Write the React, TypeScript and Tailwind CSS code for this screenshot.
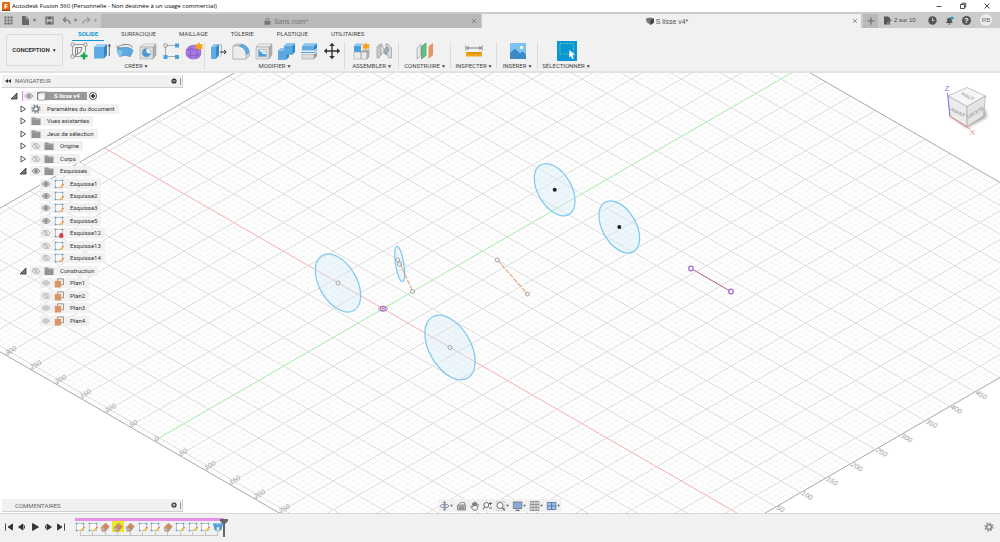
import type { ReactNode } from 'react';
import { clsx } from 'clsx';

/* ---------- ribbon icons, 18 x 18 ---------- */

function Glyph({ children, className = 'size-[18px]', box = 18 }: { children: ReactNode; className?: string; box?: number }) {
  return (
    <svg viewBox={`0 0 ${box} ${box}`} className={clsx('shrink-0', className)} fill="none" aria-hidden="true">
      {children}
    </svg>
  );
}

const NewSketch = () => (
  <Glyph>
    <path d="M3 2.500h12M3 14.500h7M2.500 3v11.500M15.500 3v7" stroke="#888" strokeWidth=".8" />
    <path d="M5.500 5.500h6.500l-1.500 4.500-5 3.500zM7.500 5.500v6.500" stroke="#666" strokeWidth=".8" />
    <path d="M1 1h3v3H1zM14 1h3v3h-3zM1 13h3v3H1z" fill="#f4f4f4" stroke="#888" strokeWidth=".7" />
    <path d="M14 10.500v7M10.500 14h7" stroke="#1fa64a" strokeWidth="2.400" />
  </Glyph>
);

const Extrude = () => (
  <Glyph>
    <path d="M1 5l3-3h10l-3 3z" fill="#9fd0f2" />
    <path d="M1 5h10v11.500H1z" fill="#5ea9e2" />
    <path d="M11 5l3-3v11l-3 3.500z" fill="#3583c2" />
    <path d="M16.300 14V3M15.100 4.600l1.200-2.600 1.200 2.600" stroke="#444" strokeWidth=".8" />
  </Glyph>
);

const Revolve = () => (
  <Glyph>
    <path d="M1 9C2 4 16 4 17 9l-3 6c-2-2-8-2-10 0z" fill="#5ea9e2" stroke="#3d87c4" strokeWidth=".6" />
    <path d="M1 9c3-2.500 5-1 6 1.500L4 15z" fill="#86c2ee" />
    <path d="M1.500 6.500C3 1.500 15 1 16.500 5.500M1 3.500l.5 3 3-.8" stroke="#777" strokeWidth=".9" />
  </Glyph>
);

const Hole = () => (
  <Glyph>
    <path d="M1 5l4-3h12l-3 3z" fill="#eee" stroke="#999" strokeWidth=".5" />
    <path d="M14 5l3-3v11l-3 4z" fill="#b0b0b0" stroke="#999" strokeWidth=".5" />
    <path d="M1 5h13v12H1z" fill="#dedede" stroke="#999" strokeWidth=".5" />
    <circle cx="7.500" cy="10.500" r="4.300" fill="#fff" stroke="#888" strokeWidth=".6" />
    <path d="M7.500 10.500V6.400a4.200 4.200 0 1 0 4 5.300z" fill="#4a9ad6" />
  </Glyph>
);

const Pattern = () => (
  <Glyph>
    <path d="M3.500 3.500h11M3.500 3.500v11h11" stroke="#999" strokeWidth=".8" />
    <path d="M2 2h3v3H2z" fill="#fff" stroke="#888" strokeWidth=".8" />
    <path d="M13 1.500h4v4h-4zM1.500 13h4v4h-4zM13 13h4v4h-4z" fill="#4d9fdc" />
  </Glyph>
);

const Freeform = () => (
  <Glyph>
    <path d="M2 6c3-4 10-4 13-1 2 4 2 8-1 11-4 2-9 2-12-1-2-3-2-6 0-9z" fill="#a67bdf" />
    <path d="M1 8c4-1 10-1 15 0M1 12.500c4 1.500 10 1.500 15 0M6 4c-1 4-1 9 0 13M11.500 4c1 4 1 9 0 13" stroke="#8455c6" strokeWidth=".8" />
    <path d="M14 0l1.200 2.500L18 2l-1 2.500L18 7l-2.800-.5L14 9l-1.200-2.500L10 7l1-2.500L10 2l2.800.5z" fill="#f6a21b" />
  </Glyph>
);

const PressPull = () => (
  <Glyph>
    <path d="M2 5l3-3h5l-3 3v12H2z" fill="#8cc6f0" />
    <path d="M7 5l3-3v11l-3 4z" fill="#3a8ac9" />
    <path d="M2 5h5v12H2z" fill="#61ace3" />
    <path d="M10 3h2.500v10L10 15" stroke="#999" strokeWidth=".7" />
    <path d="M11 10h6M15 8l2.200 2L15 12" stroke="#333" strokeWidth="1" />
  </Glyph>
);

const Fillet = () => (
  <Glyph>
    <path d="M1 4l3-2h5c6 1 8 5 8.500 9v3L14 17H1z" fill="#cfcfcf" stroke="#9b9b9b" strokeWidth=".5" />
    <path d="M1 4h5c5 1 8 4 8 9v4H1z" fill="#ececec" stroke="#9b9b9b" strokeWidth=".5" />
    <path d="M6 4l4-2c4 1 7 4 7.500 8.500L14 13C14 8 11 5 6 4z" fill="#5ba8e1" />
  </Glyph>
);

const Shell = () => (
  <Glyph>
    <path d="M1 5l3-3h13l-3 3z" fill="#eee" stroke="#999" strokeWidth=".5" />
    <path d="M14 5l3-3v11l-3 4z" fill="#b0b0b0" stroke="#999" strokeWidth=".5" />
    <path d="M1 5h13v12H1z" fill="#e2e2e2" stroke="#999" strokeWidth=".5" />
    <path d="M3.500 7.500h8v7h-8z" fill="#fff" stroke="#999" strokeWidth=".5" />
    <path d="M3.500 7.500L7 10.500v1l4.500 1v2h-8z" fill="#4d9fdc" />
    <path d="M7 8h4v3.500H7z" fill="#cfe6f6" />
  </Glyph>
);

const Combine = () => (
  <Glyph>
    <path d="M7 4l2.500-2.500H18V10l-2.500 2.500H12V15l-2.500 2.500H1V9l2.500-2.500H7z" fill="#3585c6" />
    <path d="M7 4h8.500v8.500H9.500v5H1V9h6z" fill="#5ba8e1" />
    <path d="M7 4l2.500-2.500H18L15.500 4zM1 9l2.500-2.500H7V9z" fill="#8cc6f0" />
  </Glyph>
);

const Offset = () => (
  <Glyph>
    <path d="M2 4l3-2.500h12l-3 2.500v4.500H2z" fill="#61ace3" />
    <path d="M2 4l3-2.500h12L14 4z" fill="#8cc6f0" />
    <path d="M14 4l3-2.500v4.500l-3 2.500z" fill="#3585c6" />
    <path d="M1 10.500h13l3.500-3" stroke="#4d9fdc" strokeWidth="1" />
    <path d="M2 12.500h12V17H2z" fill="#ddd" stroke="#999" strokeWidth=".5" />
    <path d="M14 12.500l3-2.500v4l-3 3z" fill="#999" />
  </Glyph>
);

const Move = () => (
  <Glyph>
    <path d="M9 2v14M2 9h14" stroke="#333" strokeWidth="1.400" />
    <path d="M9 .800l2.800 3.200H6.200zM9 17.200L11.800 14H6.200zM.8 9L4 6.200v5.600zM17.200 9L14 6.200v5.600z" fill="#333" />
  </Glyph>
);

const NewComponent = () => (
  <Glyph>
    <path d="M2 3.500h7V10H2z" fill="#4d9fdc" />
    <path d="M2 3.500L4 1.500h7l-2 2z" fill="#8cc6f0" />
    <path d="M2 10h7v7H2zM9 10h6v7H9z" fill="#ececec" stroke="#999" strokeWidth=".5" />
    <path d="M15 10l2-2v7l-2 2zM9 10l2-2h6l-2 2z" fill="#b5b5b5" stroke="#999" strokeWidth=".5" />
    <path d="M14 0l1 2.500 2.800-.5-1 2.300 1 2.500-2.800-.5-1 2.400-1-2.400-2.800.5 1-2.500-1-2.300 2.800.5z" fill="#f6a21b" />
  </Glyph>
);

const Joint = () => (
  <Glyph>
    <path d="M2 5l3-3h2v9l-3 5H2z" fill="#c9c9c9" stroke="#8a8a8a" strokeWidth=".6" />
    <path d="M5 4c4 0 4 3 4 6l-3 3V8z" fill="#e7e7e7" stroke="#8a8a8a" strokeWidth=".6" />
    <path d="M16.500 6L13 2h-2v8l3 6h2.500z" fill="#d9d9d9" stroke="#8a8a8a" strokeWidth=".6" />
    <path d="M13 5c-3 0-4 3-4 6l2 2 3-5z" fill="#9fadb8" stroke="#8a8a8a" strokeWidth=".6" />
  </Glyph>
);

const Plane = () => (
  <Glyph>
    <path d="M1 6l4-4v11l-4 4z" fill="#e6e6e6" stroke="#999" strokeWidth=".6" />
    <path d="M5.500 4.500L10 1v12.500L5.500 17z" fill="#5cc087" stroke="#3d8d60" strokeWidth=".6" />
    <path d="M12.500 4.500L17 1v12l-4.500 4z" fill="#e39566" />
  </Glyph>
);

const Measure = () => (
  <Glyph>
    <path d="M1 3.500v5M17 3.500v5M2 6h14M4 4.500L2 6l2 1.500M14 4.500L16 6l-2 1.500" stroke="#666" strokeWidth=".8" />
    <path d="M1 10h16v4.500H1z" fill="#f2a516" />
    <path d="M3 10v2M5 10v2M7 10v2M9 10v2M11 10v2M13 10v2M15 10v2" stroke="#a56b00" strokeWidth=".6" />
  </Glyph>
);

const InsertImage = () => (
  <Glyph>
    <path d="M1 1h16v16H1z" fill="#7cc3f5" />
    <path d="M1 11l5-4.500 5 5 2.500-2 3.500 3V17H1z" fill="#3a8ac9" />
    <circle cx="12.500" cy="5.500" r="1.800" fill="#fdf7c9" />
  </Glyph>
);

const SelectTool = () => (
  <Glyph className="size-5 bg-[#0b96d8]" box={20}>
    <path d="M3 2.500h13.500v10.500H3z" stroke="#5fd08b" strokeWidth=".9" strokeDasharray="2 1" />
    <path d="M12.500 9l5.500 5-2.500.3 1.300 2.900-1.600.8-1.300-3-1.800 1.700z" fill="#fff" />
  </Glyph>
);

/* ---------- small glyphs ---------- */

function Eye({ tone = '#888', off = false }: { tone?: string; off?: boolean }) {
  return (
    <Glyph className="size-[10px]" box={10}>
      <path d="M1 5c2-3.300 6-3.300 8 0-2 3.300-6 3.300-8 0z" stroke={tone} strokeWidth=".8" fill={off ? 'none' : '#ccc'} />
      <circle cx="5" cy="5" r="1.400" fill={off ? 'none' : tone} stroke={tone} strokeWidth=".6" />
      {off && <path d="M1.800 2l6.500 6" stroke={tone} strokeWidth=".7" />}
    </Glyph>
  );
}

const Folder = () => (
  <Glyph className="size-[10px]" box={10}>
    <path d="M.5 1.500h3.500l1 1h4.500v6.500h-9z" fill="#929292" />
    <path d="M.5 3.300h9" stroke="#bbb" strokeWidth=".5" />
  </Glyph>
);

const Gear = () => (
  <Glyph className="size-[10px]" box={10}>
    <circle cx="5" cy="5" r="2.500" stroke="#888" strokeWidth="1.700" />
    <circle cx="5" cy="5" r="4" stroke="#888" strokeWidth="1.200" strokeDasharray="1.570 1.570" />
  </Glyph>
);

function SketchIcon({ locked = false }: { locked?: boolean }) {
  return (
    <Glyph className="size-[10px]" box={10}>
      <path d="M1.500 1.500h7v7h-7z" stroke="#aaa" strokeWidth=".7" fill="#fafafa" />
      <path d="M.700.700h1.600v1.600H.7zM7.700.700h1.600v1.600H7.700zM.7 7.700h1.600v1.600H.7z" fill={locked ? '#888' : '#4d9fdc'} />
      {locked ? (
        <path d="M5.500 6.500h3.500v3h-3.500zM6.300 6.500V5.300h2v1.200" fill="#d2414b" stroke="#d2414b" strokeWidth=".6" />
      ) : (
        <>
          <path d="M5 9.500l.4-1.600L8.200 5.500l1 1-2.600 2.600z" fill="#f8bb45" />
          <path d="M8.200 5.500l1 1 .7-1-.8-.8z" fill="#e0563f" />
        </>
      )}
    </Glyph>
  );
}

const PlaneIcon = () => (
  <Glyph className="size-[10px]" box={10}>
    <path d="M3.500.800h6v6h-6z" stroke="#888" strokeWidth=".8" fill="#f5e6da" />
    <path d="M.8 3h6.200v6.500H.8z" fill="#dd9465" />
  </Glyph>
);

const ComponentIcon = () => (
  <Glyph className="size-[10px]" box={10}>
    <path d="M1 3l2-2h6v6L7.500 9H1z" fill="#cfcfcf" stroke="#666" strokeWidth=".6" />
    <path d="M1.500 3.200H7v5.500H1.500z" fill="#fafafa" />
  </Glyph>
);

const PlaneFeature = () => (
  <Glyph className="size-[10px]" box={10}>
    <path d="M1 5.500L5.500 1l4 3.500-4 5H2z" fill="#d98a5c" stroke="#a5a5a5" strokeWidth=".5" />
    <path d="M1 7.500l1.500-2.500 2.500 2.500-1.500 2z" fill="#b5b5b5" />
    <path d="M4 4.500l3 2.500" stroke="#8a9a6a" strokeWidth=".8" />
  </Glyph>
);

const FormFeature = () => (
  <Glyph className="size-[10px]" box={10}>
    <path d="M0 1h10L8.500 8 5 9.500 1.500 8z" fill="#4d9fdc" />
    <path d="M0 1l5 2 5-2z" fill="#8cc6f0" />
    <path d="M3.500 5.500l1.500-1 1.500 1V8L5 9.500 3.500 8z" fill="#e8e8e8" stroke="#999" strokeWidth=".4" />
  </Glyph>
);

const Caret = () => <span className="text-[5px] leading-none">▼</span>;

/* ---------- top bars ---------- */

function TitleBar() {
  return (
    <header className="flex h-3 items-center bg-white pr-[9px] pl-[2px] text-black">
      <svg viewBox="0 0 8 9" className="h-[9px] w-2" aria-hidden="true">
        <rect width="8" height="9" rx="1" fill="#e8670c" />
        <path d="M2.500 2h3.300v1.100H3.800v1h1.600v1.100H3.800V7H2.500z" fill="#fff" />
        <path d="M0 7.800h8V9H0z" fill="#9b3c00" />
      </svg>
      <h1 className="ml-[2px] font-['Open_Sans',sans-serif] text-[6px] leading-none">
        Autodesk Fusion 360 (Personnelle - Non destinée à un usage commercial)
      </h1>
      <div className="ml-auto flex items-center gap-4">
        <button aria-label="Réduire">
          <Glyph className="size-2" box={8}><path d="M1.500 4.500h5" stroke="#222" strokeWidth=".8" /></Glyph>
        </button>
        <button aria-label="Restaurer">
          <Glyph className="size-2" box={8}><path d="M1.500 2.500h4v4h-4zM3 2.500V1.200h3.800V5H5.500" stroke="#222" strokeWidth=".8" /></Glyph>
        </button>
        <button aria-label="Fermer">
          <Glyph className="size-2" box={8}><path d="M1.500 1.500l5 5M6.500 1.500l-5 5" stroke="#222" strokeWidth=".8" /></Glyph>
        </button>
      </div>
    </header>
  );
}

const Close = () => (
  <Glyph className="size-[6px]" box={6}><path d="M1 1l4 4M5 1L1 5" stroke="#777" strokeWidth=".8" /></Glyph>
);

function DocumentTabs() {
  return (
    <div className="flex h-4 bg-[#cbcbcb] pt-[2px] text-[7px] leading-none text-[#666]">
      <div className="flex w-[101px] shrink-0 items-center pb-[2px] pl-1 text-[#6a6a6a]">
        <button aria-label="Panneau de données">
          <Glyph className="size-[9px]" box={9}>
            <path d="M.5.500h2v2h-2zM3.500.500h2v2h-2zM6.500.500h2v2h-2zM.5 3.500h2v2h-2zM3.500 3.500h2v2h-2zM6.500 3.500h2v2h-2zM.5 6.500h2v2h-2zM3.500 6.500h2v2h-2zM6.500 6.500h2v2h-2z" fill="#666" />
          </Glyph>
        </button>
        <button aria-label="Fichier" className="ml-2 flex items-center gap-[2px]">
          <Glyph className="size-[9px]" box={9}><path d="M1 0h4l3 3v6H1z" fill="#666" /><path d="M5 0v3h3" stroke="#ccc" strokeWidth=".6" /></Glyph>
          <Caret />
        </button>
        <button aria-label="Enregistrer" className="ml-2">
          <Glyph className="size-[9px]" box={9}>
            <path d="M1 1h7v7H1z" stroke="#666" strokeWidth="1.200" />
            <path d="M2.500 1h4v2.500h-4zM2.500 5.500h4V8h-4z" fill="#666" />
          </Glyph>
        </button>
        <button aria-label="Annuler" className="ml-2 flex items-center gap-[2px]">
          <Glyph className="size-[9px]" box={9}><path d="M8 8C8 4.500 6 3.500 2 3.700M4 1L1.200 3.700 4 6.200" stroke="#777" strokeWidth="1.200" /></Glyph>
          <Caret />
        </button>
        <button aria-label="Rétablir" className="ml-1 flex items-center gap-[2px] text-[#999]">
          <Glyph className="size-[9px]" box={9}><path d="M1 8c0-3.500 2-4.500 6-4.300M5 1l2.800 2.700L5 6.200" stroke="#999" strokeWidth="1.200" /></Glyph>
          <Caret />
        </button>
      </div>
      <div className="flex flex-1 items-center bg-[#b9b9b9] pr-1">
        <button className="flex flex-1 items-center justify-center gap-[3px] text-[#777]">
          <Glyph className="size-[7px]" box={7}>
            <path d="M.5 3h6v3.800h-6z" fill="#777" />
            <path d="M2 3V1.800a1.500 1.500 0 0 1 3 0V3" stroke="#777" strokeWidth=".9" />
          </Glyph>
          Sans nom*
        </button>
        <button aria-label="Fermer Sans nom"><Close /></button>
      </div>
      <div className="ml-px flex flex-1 items-center bg-[#f1f1f1] pr-[3px]">
        <button className="flex flex-1 items-center justify-center gap-[2px] text-[#555]">
          <Glyph className="size-2" box={8}>
            <path d="M0 1.500L4 .500l4 1v4L4.500 8 .5 5z" fill="#777" />
            <path d="M4.500 3L8 1.500v4L4.500 8z" fill="#444" />
          </Glyph>
          S lisse v4*
        </button>
        <button aria-label="Fermer S lisse v4"><Close /></button>
      </div>
      <button aria-label="Nouvel onglet" className="ml-[2px] flex w-[15px] items-center justify-center bg-[#b9b9b9]">
        <Glyph className="size-2" box={8}><path d="M4 .500v7M.5 4h7" stroke="#666" strokeWidth="1.100" /></Glyph>
      </button>
      <div className="flex w-[122px] shrink-0 items-center pb-[2px] pl-[5px]">
        <button className="flex w-9 items-center gap-[2px] text-[6px] whitespace-nowrap text-[#444]">
          <Glyph className="size-[9px]" box={9}>
            <path d="M1 .500h4L7 2v6.500H1z" fill="#555" />
            <path d="M4 7l4-4 1 1-4 4z" fill="#555" stroke="#ccc" strokeWidth=".4" />
          </Glyph>
          2 sur 10
        </button>
        <button aria-label="État des tâches" className="ml-[9px]">
          <Glyph className="size-[9px]" box={9}><circle cx="4.500" cy="4.500" r="4.200" fill="#555" /><path d="M4.500 2v2.700h2" stroke="#ddd" strokeWidth=".9" /></Glyph>
        </button>
        <button aria-label="Notifications" className="ml-2">
          <Glyph className="size-[9px]" box={9}>
            <path d="M1 7c1-1 1-2 1.200-3.500.3-2.500 4-2.500 4.300 0C6.700 5 7 6 8 7zM3.500 7.500h2v1h-2z" fill="#555" />
            <circle cx="7" cy="2" r="1.600" fill="#1696d9" />
          </Glyph>
        </button>
        <button aria-label="Aide" className="ml-2 flex size-[9px] items-center justify-center rounded-full bg-[#555] text-[7px] font-bold text-white">?</button>
        <button className="ml-[9px] flex size-3 items-center justify-center rounded-full bg-[#ececec] text-[6px] text-[#666]">RB</button>
      </div>
    </div>
  );
}

const workspaceTabs = ['SOLIDE', 'SURFACIQUE', 'MAILLAGE', 'TÔLERIE', 'PLASTIQUE', 'UTILITAIRES'];

const toolGroups = [
  { label: 'CRÉER', width: 'w-[137px]', tools: [NewSketch, Extrude, Revolve, Hole, Pattern, Freeform] },
  { label: 'MODIFIER', width: 'w-[140px] px-[2px]', tools: [PressPull, Fillet, Shell, Combine, Offset, Move] },
  { label: 'ASSEMBLER', width: 'w-[54px] px-1', tools: [NewComponent, Joint] },
  { label: 'CONSTRUIRE', width: 'w-[52px]', tools: [Plane] },
  { label: 'INSPECTER', width: 'w-[46px]', tools: [Measure] },
  { label: 'INSÉRER', width: 'w-[41px]', tools: [InsertImage] },
  { label: 'SÉLECTIONNER', width: 'w-[57px]', tools: [SelectTool] },
];

function Ribbon() {
  return (
    <div className="flex h-[45px] border-b-2 border-[#e2e2e2] bg-[#f1f1f1] font-[Roboto,sans-serif] text-[6px] leading-none text-[#444]">
      <button className="mt-[6px] ml-[6px] flex h-8 w-[57px] items-center justify-center gap-[2px] rounded-xs border border-[#dadada] font-bold text-[#333]">
        CONCEPTION <Caret />
      </button>
      <div className="ml-[5px]">
        <nav className="flex gap-[11px] pl-1">
          {workspaceTabs.map((tab, i) => (
            <button
              key={tab}
              className={clsx('h-[13px] border-b px-[6px]', i === 0 ? 'border-[#1696d9] font-bold text-[#1696d9]' : 'border-transparent')}
            >
              {tab}
            </button>
          ))}
        </nav>
        <div className="flex">
          {toolGroups.map(({ label, width, tools }, i) => (
            <div key={label} className={clsx('relative', width)}>
              <div className="flex h-5 items-center justify-around">
                {tools.map((Tool, n) => (
                  <button key={n} aria-label={`${label} ${n + 1}`}><Tool /></button>
                ))}
              </div>
              <button className="flex h-[10px] w-full items-center justify-center gap-px whitespace-nowrap">
                {label} <Caret />
              </button>
              {i < toolGroups.length - 1 && <span className="absolute top-px right-0 h-[27px] w-px bg-[#dcdcdc]" />}
            </div>
          ))}
        </div>
      </div>
    </div>
  );
}

/* ---------- 3D canvas ---------- */

const ORIGIN = { x: 383, y: 308.7 };
const STEP = { x: 24.87, y: 14.36 };
const R_MIN = -11.2;
const R_MAX = 14.8;
const G_MIN = -9.2;
const G_MAX = 16.8;

// r runs along the red axis, g along the green one, one unit = 50 mm
const px = (r: number, g: number) => ORIGIN.x + STEP.x * (r + g);
const py = (r: number, g: number) => ORIGIN.y + STEP.y * (r - g);
const seg = (r1: number, g1: number, r2: number, g2: number) =>
  `M${px(r1, g1).toFixed(2)} ${py(r1, g1).toFixed(2)}L${px(r2, g2).toFixed(2)} ${py(r2, g2).toFixed(2)}`;

function gridPath(major: boolean) {
  let d = '';
  for (let i = 0; i <= 130; i++) {
    const r = R_MIN + i / 5;
    const g = G_MIN + i / 5;
    if (Math.abs(r - Math.round(r)) < 0.01 === major) d += seg(r, G_MIN, r, G_MAX);
    if (Math.abs(g - Math.round(g)) < 0.01 === major) d += seg(R_MIN, g, R_MAX, g);
  }
  return d;
}

const leftTicks = [-6, -5, -4, -3, -2, -1, 0, 1, 2, 3, 4, 5];
const rightTicks = [1, 2, 3, 4, 5, 6, 7, 8, 9];

const profiles = [
  { x: 338, y: 283, rx: 31.8, ry: 18.7, angle: 60 },
  { x: 450, y: 347.5, rx: 35.3, ry: 20.7, angle: 60 },
  { x: 554.7, y: 189.7, rx: 28.5, ry: 16.8, angle: 60 },
  { x: 619.3, y: 227, rx: 28.5, ry: 16.8, angle: 60 },
  { x: 399.7, y: 264, rx: 17.9, ry: 4.1, angle: 81 },
];

const openPoints = [[338, 283], [450, 347.5], [397.7, 260], [399.5, 264], [412.5, 291.5], [497.3, 260], [527.5, 294]];

function Scene() {
  return (
    <svg viewBox="0 73 1000 440" preserveAspectRatio="xMidYMid slice" className="absolute inset-0 size-full" fill="none" role="img" aria-label="Vue 3D">
      <path d={gridPath(false)} stroke="#f0f0f0" strokeWidth=".7" />
      <path d={gridPath(true)} stroke="#dcdcdc" strokeWidth="1" />
      <path
        d={seg(R_MIN, G_MIN, R_MAX, G_MIN) + seg(R_MAX, G_MIN, R_MAX, G_MAX) + seg(R_MIN, G_MIN, R_MIN, G_MAX) + seg(R_MIN, G_MAX, R_MAX, G_MAX)}
        stroke="#a2a2a2"
        strokeWidth=".9"
      />
      <path d={seg(R_MIN, 0, R_MAX, 0)} stroke="#ffb3b3" strokeWidth=".9" />
      <path d={seg(0, G_MIN, 0, G_MAX)} stroke="#a8f5a8" strokeWidth=".9" />

      <g fill="#9c9c9c" fontFamily="Liberation Sans, sans-serif" fontSize="7" fontStyle="italic">
        {leftTicks.map((t) => (
          <text key={t} transform={`translate(${px(t, G_MIN) + 2} ${py(t, G_MIN) + 1}) rotate(-30)`}>{Math.abs(t * 50)}</text>
        ))}
        {rightTicks.map((t) => (
          <text key={t} transform={`translate(${px(R_MAX, t)} ${py(R_MAX, t) + 2}) rotate(30)`}>{t * 50}</text>
        ))}
      </g>

      {profiles.map((p) => (
        <ellipse
          key={p.x}
          rx={p.rx}
          ry={p.ry}
          transform={`translate(${p.x} ${p.y}) rotate(${p.angle})`}
          fill="#d4ebf8"
          fillOpacity=".4"
          stroke="#7cc9f0"
          strokeWidth="1.200"
        />
      ))}
      <path d="M399.700 263L412.500 291M497.300 260L527.500 294" stroke="#e8a070" strokeWidth="1.100" strokeDasharray="5 1.200" />
      {openPoints.map(([x, y]) => (
        <circle key={x} cx={x} cy={y} r="2" stroke="#999" strokeWidth=".9" fill="#fff" fillOpacity=".5" />
      ))}
      <circle cx="554.700" cy="189.700" r="2" fill="#222" />
      <circle cx="619.300" cy="227" r="2" fill="#222" />

      <path d="M691 268.500L731 291.500" stroke="#b25c8c" strokeWidth="1" />
      <g stroke="#9a6cc8" strokeWidth="1.200" fill="#fff">
        <circle cx="691" cy="268.500" r="2.300" />
        <circle cx="731" cy="291.500" r="2.300" />
      </g>
      <ellipse cx="383" cy="308.700" rx="4.500" ry="2.400" stroke="#999" strokeWidth=".8" />
      <ellipse cx="383" cy="308.700" rx="3" ry="2.400" stroke="#a070c8" strokeWidth="1" fill="#d9b8e6" />
      <circle cx="383" cy="308.700" r=".8" fill="#e0903c" />
    </svg>
  );
}

function ViewCube() {
  return (
    <svg viewBox="0 0 54 62" className="absolute top-[8px] right-[7px] h-[62px] w-[54px]" fill="none" role="img" aria-label="Cube de visualisation">
      <defs>
        <filter id="soft" x="-30%" y="-30%" width="160%" height="160%"><feGaussianBlur stdDeviation="1.800" /></filter>
      </defs>
      <path d="M11 35L28 47 48 36 46 28 12 28z" fill="#aaa" filter="url(#soft)" />
      <path d="M28 6.500L46.500 15 28 25.500 9 15z" fill="#f6f6f6" stroke="#aaa" strokeWidth=".7" />
      <path d="M9 15l19 10.500v20L11 35z" fill="#ececec" stroke="#aaa" strokeWidth=".7" />
      <path d="M28 25.500L46.500 15l-2 20L28 45.500z" fill="#e4e4e4" stroke="#aaa" strokeWidth=".7" />
      <path d="M8.500 12L11 35.500" stroke="#7d7df0" strokeWidth="1" />
      <path d="M11 35.500L31 48" stroke="#f08a8a" strokeWidth="1" />
      <g fontFamily="Liberation Sans, sans-serif" fontSize="5" fill="#8a8a8a" textAnchor="middle">
        <text transform="translate(28 17) rotate(28)">HAUT</text>
        <text transform="translate(18 33) rotate(28)">AVANT</text>
        <text transform="translate(37.500 33) rotate(-30)">DROITE</text>
      </g>
      <g fontFamily="Liberation Sans, sans-serif" fontSize="8" textAnchor="middle">
        <text x="8" y="10" fill="#7d7df0">Z</text>
        <text x="33.500" y="54" fill="#f08a8a">X</text>
      </g>
    </svg>
  );
}

/* ---------- browser tree ---------- */

type Row = {
  name: string;
  depth: 1 | 2;
  icon: 'gear' | 'folder' | 'sketch' | 'locked' | 'plane';
  eye?: 'on' | 'off' | 'dim';
  open?: boolean;
};

const rows: Row[] = [
  { name: 'Paramètres du document', depth: 1, icon: 'gear' },
  { name: 'Vues existantes', depth: 1, icon: 'folder' },
  { name: 'Jeux de sélection', depth: 1, icon: 'folder' },
  { name: 'Origine', depth: 1, icon: 'folder', eye: 'off' },
  { name: 'Corps', depth: 1, icon: 'folder', eye: 'off' },
  { name: 'Esquisses', depth: 1, icon: 'folder', eye: 'on', open: true },
  { name: 'Esquisse1', depth: 2, icon: 'sketch', eye: 'on' },
  { name: 'Esquisse2', depth: 2, icon: 'sketch', eye: 'on' },
  { name: 'Esquisse3', depth: 2, icon: 'sketch', eye: 'on' },
  { name: 'Esquisse5', depth: 2, icon: 'sketch', eye: 'on' },
  { name: 'Esquisse12', depth: 2, icon: 'locked', eye: 'off' },
  { name: 'Esquisse13', depth: 2, icon: 'sketch', eye: 'off' },
  { name: 'Esquisse14', depth: 2, icon: 'sketch', eye: 'off' },
  { name: 'Construction', depth: 1, icon: 'folder', eye: 'off', open: true },
  { name: 'Plan1', depth: 2, icon: 'plane', eye: 'dim' },
  { name: 'Plan2', depth: 2, icon: 'plane', eye: 'off' },
  { name: 'Plan3', depth: 2, icon: 'plane', eye: 'dim' },
  { name: 'Plan4', depth: 2, icon: 'plane', eye: 'dim' },
];

const rowIcons = {
  gear: <Gear />,
  folder: <Folder />,
  sketch: <SketchIcon />,
  locked: <SketchIcon locked />,
  plane: <PlaneIcon />,
};

function Arrow({ open = false }: { open?: boolean }) {
  return (
    <Glyph className="size-2" box={8}>
      {open ? <path d="M7 1v6H1z" fill="#777" stroke="#333" strokeWidth=".8" /> : <path d="M2 1l4.500 3L2 7z" stroke="#444" strokeWidth=".9" fill="#fff" />}
    </Glyph>
  );
}

function TreeRow({ row }: { row: Row }) {
  return (
    <li className={clsx('flex items-center', row.depth === 1 ? 'pl-[19px]' : 'pl-10')}>
      {row.depth === 1 && (
        <button aria-label={`Développer ${row.name}`} className="mr-[3px]"><Arrow open={row.open} /></button>
      )}
      <div className="flex h-[10px] items-center bg-[#f1f1f1] pr-1 pl-px">
        {row.eye && (
          <button aria-label={`Visibilité ${row.name}`} className="mr-[3px]">
            <Eye off={row.eye === 'off'} tone={row.eye === 'on' ? '#888' : row.eye === 'off' ? '#aaa' : '#ccc'} />
          </button>
        )}
        {rowIcons[row.icon]}
        <button className="ml-[6px] whitespace-nowrap">{row.name}</button>
      </div>
    </li>
  );
}

function PanelHeader({ title, collapse = false, plus = false }: { title: string; collapse?: boolean; plus?: boolean }) {
  return (
    <div className="flex h-[13px] w-[181px] items-center border-r border-b border-[#cfcfcf] bg-[#f1f1f1] pr-px pl-[3px] font-[Roboto,sans-serif] text-[6px] text-[#666]">
      <span className="w-[10px]">
        {collapse && (
          <Glyph className="size-[6px]" box={6}><path d="M3 1v4L0 3zM6 1v4L3 3z" fill="#333" /></Glyph>
        )}
      </span>
      <h2>{title}</h2>
      <button aria-label={`Options ${title}`} className="mr-[2px] ml-auto">
        <Glyph className="size-[6px]" box={6}>
          <circle cx="3" cy="3" r="2.600" fill="#333" />
          <path d={plus ? 'M1.500 3h3M3 1.500v3' : 'M1.500 3h3'} stroke="#fff" strokeWidth=".8" />
        </Glyph>
      </button>
      <span className="h-[7px] w-[2px] border-r border-[#999]" />
    </div>
  );
}

function BrowserPanel() {
  return (
    <aside className="absolute top-[2px] left-0 font-[Roboto,sans-serif] text-[6px] leading-none text-[#333]">
      <div className="ml-[2px]"><PanelHeader title="NAVIGATEUR" collapse /></div>
      <ul className="mt-[2px] grid h-[237px] auto-rows-fr">
        <li className="flex items-center pl-[10px]">
          <button aria-label="Réduire S lisse v4"><Arrow open /></button>
          <div className="ml-1 flex h-[10px] items-center border-l border-[#e08ae4] bg-[#f1f1f1] pl-px">
            <button aria-label="Visibilité S lisse v4"><Eye tone="#999" /></button>
            <div className="ml-[3px] flex h-2 w-[50px] items-center bg-[#999] text-white">
              <ComponentIcon />
              <button className="ml-[7px] font-bold whitespace-nowrap">S lisse v4</button>
            </div>
            <label className="ml-[2px] flex">
              <input type="radio" name="active" defaultChecked aria-label="Activer le composant" className="size-2 appearance-none rounded-full border border-[#555] bg-white bg-radial from-[#333] from-35% to-white to-45%" />
            </label>
          </div>
        </li>
        {rows.map((row) => <TreeRow key={row.name} row={row} />)}
      </ul>
    </aside>
  );
}

/* ---------- navigation bar ---------- */

const navTools = [
  { name: 'Orbite', menu: true, art: <><ellipse cx="5" cy="5" rx="4.200" ry="1.800" stroke="#777" strokeWidth=".8" /><path d="M5 .500v9M3.500 2L5 .500 6.500 2M3.500 8L5 9.500 6.500 8" stroke="#777" strokeWidth=".8" /><circle cx="5" cy="5" r="1.300" fill="#7ba8d8" /></> },
  { name: 'Regarder', menu: false, art: <><path d="M1 4h8v5H1z" fill="#bbb" stroke="#777" strokeWidth=".8" /><path d="M2 3.500L4 1.500h4v2M2.500 6h5M2.500 7.500h5" stroke="#777" strokeWidth=".8" /></> },
  { name: 'Panoramique', menu: false, art: <path d="M3.500 9L1 5.500l1-.5 1.500 1.200L2.800 2.500l.8-.3L4.500 5V1h.8v4l.9-3.500.8.2L6.600 5.300 8 3.200l.8.400L7.500 8l-.8 1.300z" stroke="#555" strokeWidth=".7" fill="#f7f7f7" /> },
  { name: 'Zoom', menu: false, art: <><circle cx="3.800" cy="4" r="2.500" stroke="#555" strokeWidth=".9" fill="#fff" /><path d="M2 6L.5 8.500M8 1v3M6.500 2.500h3M6.500 7h3" stroke="#555" strokeWidth=".9" /></> },
  { name: 'Ajuster', menu: true, art: <><path d="M.5.500h9v9h-9z" stroke="#999" strokeWidth=".7" strokeDasharray="1.500 1.500" /><circle cx="4.500" cy="4.500" r="3" stroke="#666" strokeWidth=".9" fill="#fff" /><path d="M6.700 6.700L9 9" stroke="#555" strokeWidth="1.200" /></> },
  { name: 'Affichage', menu: true, art: <><path d="M.5 1h9v6.500h-9z" fill="#86addb" stroke="#777" strokeWidth=".9" /><path d="M3 9.300h4" stroke="#666" strokeWidth="1.200" /></> },
  { name: 'Grille', menu: true, art: <path d="M.5.500h9v9h-9zM3.500.500v9M6.500.500v9M.5 3.500h9M.5 6.500h9" stroke="#888" strokeWidth=".8" fill="#ddd" /> },
  { name: 'Fenêtres', menu: true, art: <path d="M.5 1.500h9v7h-9zM5 1.500v7M.5 5h9" stroke="#4c6f9c" strokeWidth=".8" fill="#9cc0ea" /> },
];

function NavigationBar() {
  return (
    <div className="absolute bottom-px left-1/2 flex h-[13px] -translate-x-1/2 items-center gap-[3px] bg-[#f1f1f1] px-px text-[#555]">
      {navTools.map(({ name, menu, art }) => (
        <button key={name} aria-label={name} className="flex items-center">
          <Glyph className="size-[10px]" box={10}>{art}</Glyph>
          {menu && <span className="text-[4px] leading-none">▼</span>}
        </button>
      ))}
    </div>
  );
}

/* ---------- timeline ---------- */

const playback = [
  { name: 'Début', d: 'M1.500 1.500v7M8.500 2v6L4 5z' },
  { name: 'Précédent', d: 'M6 2v6L1.500 5zM7.500 3.500v3' },
  { name: 'Lecture', d: 'M2.500 1.500v7l6-3.500z' },
  { name: 'Suivant', d: 'M4 2v6L8.500 5zM2.500 3.500v3' },
  { name: 'Fin', d: 'M8.500 1.500v7M1.500 2v6L6 5z' },
];

const features = ['sketch', 'sketch', 'plane', 'active', 'plane', 'sketch', 'sketch', 'plane', 'sketch', 'sketch', 'sketch', 'form'];

function Timeline() {
  return (
    <footer className="flex h-[29px] shrink-0 items-start border-t border-[#dadada] bg-[#f1f1f1]">
      <div className="mt-2 ml-1 flex gap-[3px]">
        {playback.map(({ name, d }) => (
          <button key={name} aria-label={name}>
            <Glyph className="size-[10px]" box={10}><path d={d} fill="#333" stroke="#333" strokeWidth=".9" /></Glyph>
          </button>
        ))}
      </div>
      <div className="relative mt-1 ml-[8px] w-[150px]">
        <div className="ml-px h-[3px] bg-[#e493e8]" />
        <div className="flex">
          {features.map((kind, i) => (
            <div key={i} className="flex flex-1 flex-col items-center">
              <button
                aria-label={`Fonction ${i + 1}`}
                className={clsx('flex h-[11px] w-full items-center justify-center', kind === 'active' && 'bg-[#e9e920]')}
              >
                {kind === 'sketch' && <SketchIcon />}
                {(kind === 'plane' || kind === 'active') && <PlaneFeature />}
                {kind === 'form' && <FormFeature />}
              </button>
              <span className="h-[3px] w-px bg-[#c4c4c4]" />
            </div>
          ))}
        </div>
        <div className="mx-[6px] h-px bg-[#c4c4c4]" />
        <svg viewBox="0 0 8 18" className="absolute top-px -right-1 h-[18px] w-2" aria-hidden="true">
          <path d="M0 0h8v2L5 5v13H3V5L0 2z" fill="#666" />
        </svg>
      </div>
      <button aria-label="Paramètres de la chronologie" className="mt-2 mr-[6px] ml-auto"><Gear /></button>
    </footer>
  );
}

export default function App() {
  return (
    <div className="flex h-screen flex-col overflow-hidden bg-white font-['Liberation_Sans',sans-serif]">
      <TitleBar />
      <DocumentTabs />
      <Ribbon />
      <main className="relative flex-1 overflow-hidden">
        <Scene />
        <ViewCube />
        <BrowserPanel />
        <div className="absolute bottom-px left-[2px]"><PanelHeader title="COMMENTAIRES" plus /></div>
        <NavigationBar />
      </main>
      <Timeline />
    </div>
  );
}
